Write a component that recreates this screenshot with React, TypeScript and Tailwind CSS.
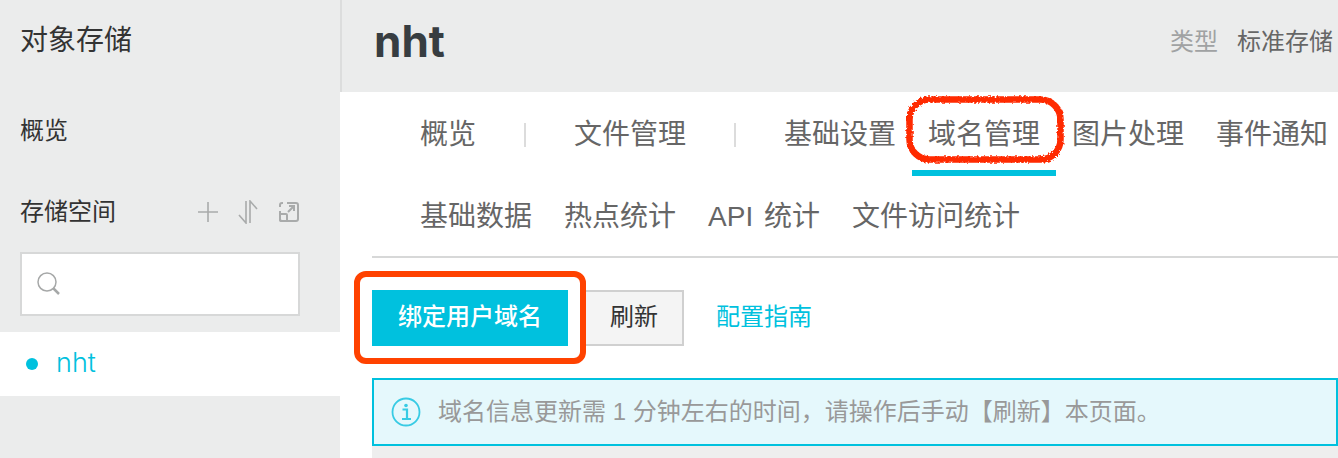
const FONT = "font-['Helvetica_Neue','Liberation_Sans','Noto_Sans_CJK_SC',sans-serif]";

const Tab = ({label}: {label: string}) => (
  <span className="shrink-0 px-4 text-[28px] leading-10 text-[#666] whitespace-nowrap [word-spacing:3px]">{label}</span>
);

const Sep = () => <span className="mx-8 h-6 w-0.5 shrink-0 bg-[#dcdcdc]" />;

const Sidebar = () => (
  <aside className="w-[340px] shrink-0 bg-[#ebecec] flex flex-col text-[#333]">
    <div className="h-20 pl-5 pt-0.5 flex items-center text-[28px]">对象存储</div>
    <div className="mt-[31px] h-10 pl-5 flex items-center text-2xl">概览</div>
    <div className="mt-10 h-10 pl-5 pr-10 pt-0.5 flex items-center justify-between text-2xl">
      <span>存储空间</span>
      <span className="flex items-center gap-5">
        <svg width="20" height="20" viewBox="0 0 20 20" fill="none" stroke="#a9abab" strokeWidth="1.6">
          <path d="M10 0v20M0 10h20" />
        </svg>
        <svg width="20" height="24" viewBox="0 0 20 24" fill="none" stroke="#a9abab" strokeWidth="1.6">
          <path d="M8 1v22L1 15M12 23V1l7 8" />
        </svg>
        <svg width="22" height="22" viewBox="0 0 22 22" fill="none" stroke="#a9abab" strokeWidth="2">
          <path d="M9 2H18a2 2 0 0 1 2 2v14a2 2 0 0 1-2 2H4a2 2 0 0 1-2-2V10" />
          <path d="M2 6V4a2 2 0 0 1 2-2h1" />
          <rect x="2" y="13" width="7" height="7" rx="1" />
          <path d="M10 11l6-6M11 5h5v5" />
        </svg>
      </span>
    </div>
    <div className="mt-[21px] ml-5 mr-10 h-16 bg-white border-2 border-[#d7d8d8] flex items-center pl-[15px]">
      <svg width="24" height="24" viewBox="0 0 24 24" fill="none" stroke="#a6a8a8">
        <circle cx="10" cy="10" r="9" strokeWidth="1.5" />
        <path d="M16.5 16.5L22 22" strokeWidth="2.5" />
      </svg>
    </div>
    <div className="mt-4 h-16 bg-white flex items-center pl-[26px] gap-[18px] text-[#00c1de]">
      <span className="size-3 rounded-full bg-[#00c1de]" />
      <span className="text-[27px] font-['Inter',sans-serif] font-light -mt-0.5">nht</span>
    </div>
  </aside>
);

const Tabs = () => (
  <div className="relative ml-8 pl-8 h-[166px] border-b-2 border-[#d7d8d8]">
    <div className="pt-[23px] flex items-center">
      <Tab label="概览" />
      <Sep />
      <Tab label="文件管理" />
      <Sep />
      <Tab label="基础设置" />
      <Tab label="域名管理" />
      <Tab label="图片处理" />
      <Tab label="事件通知" />
    </div>
    <div className="mt-[42px] flex items-center">
      <Tab label="基础数据" />
      <Tab label="热点统计" />
      <Tab label="API 统计" />
      <Tab label="文件访问统计" />
    </div>
    {/* tab underline */}
    <span className="absolute left-[540px] top-[78px] h-1.5 w-36 bg-[#00c1de]" />
    {/* hand drawn annotation */}
    <svg className="absolute left-[532px] top-0" width="162" height="74" viewBox="0 0 162 74" fill="none">
      <filter id="rough" x="-5%" y="-10%" width="110%" height="120%">
        <feTurbulence type="fractalNoise" baseFrequency="0.45" numOctaves="2" seed="4" />
        <feDisplacementMap in="SourceGraphic" scale="4" />
      </filter>
      <rect x="5.5" y="7.5" width="151" height="60" rx="20" stroke="#ff2a00" strokeWidth="6.5" filter="url(#rough)" />
    </svg>
  </div>
);

export default function App() {
  return (
    <div className={`${FONT} flex h-[458px] w-[1338px] overflow-hidden bg-white`}>
      <Sidebar />
      <main className="flex-1 min-w-0 flex flex-col">
        <header className="h-[92px] shrink-0 bg-[#ebecec] border-l-2 border-[#dcdddd] flex items-center justify-between pl-8 pb-2.5 pr-[5px]">
          <h1 className="text-[44px] font-bold text-[#373d41] font-['Inter',sans-serif]">nht</h1>
          <div className="text-2xl whitespace-nowrap pt-0.5">
            <span className="text-[#a0a2a3]">类型</span>
            <span className="ml-[19px] text-[#666]">标准存储</span>
          </div>
        </header>
        <Tabs />
        <div className="ml-8 mt-8 relative flex items-stretch h-14 text-2xl">
          <button className="w-[196px] pb-0.5 bg-[#00c1de] text-white font-medium">绑定用户域名</button>
          <button className="ml-4 w-[100px] pb-0.5 bg-[#f4f4f4] border-2 border-[#d0d0d0] text-[#333]">刷新</button>
          <span className="ml-8 -mt-0.5 self-center text-[#00c1de]">配置指南</span>
          {/* annotation around the bind button */}
          <span className="absolute -left-[18px] -top-[19px] h-[93px] w-[232px] rounded-xl border-[6px] border-[#ff4200]" />
        </div>
        <div className="ml-8 mt-8 h-[68px] shrink-0 bg-[#e5f8fc] border-2 border-[#00c1de] flex items-center pl-[17px] text-[#999] text-2xl whitespace-nowrap">
          <svg width="30" height="30" viewBox="0 0 30 30" fill="none" stroke="#38cbe4" className="shrink-0">
            <circle cx="15" cy="15" r="13.5" strokeWidth="1.8" />
            <circle cx="15" cy="8.5" r="1.8" fill="#38cbe4" stroke="none" />
            <path d="M11.5 12.5h4.5v9M11 22h9" strokeWidth="2.2" />
          </svg>
          <span className="ml-[17px]">域名信息更新需 1 分钟左右的时间，请操作后手动【刷新】本页面。</span>
        </div>
        <div className="ml-8 flex-1 bg-[#eeeeee]" />
      </main>
    </div>
  );
}
